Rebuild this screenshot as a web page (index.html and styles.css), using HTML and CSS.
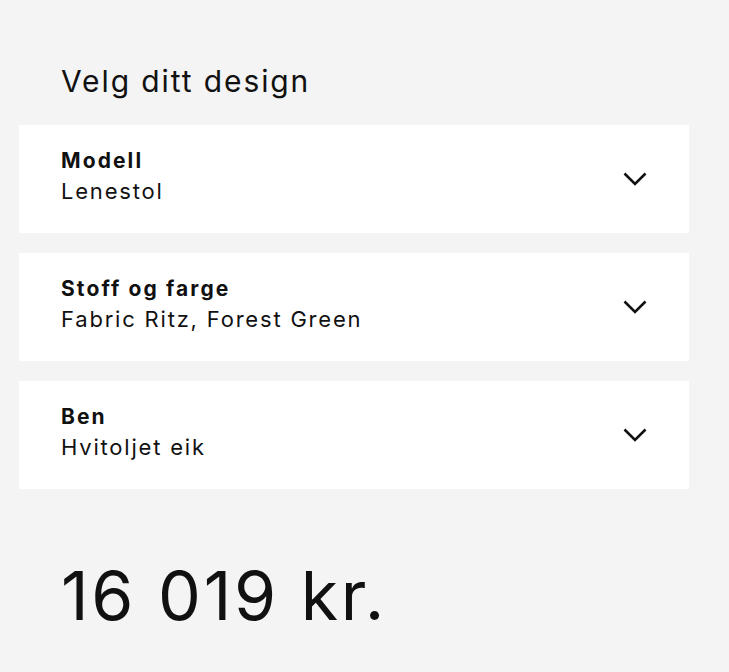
FILE: index.html
```html
<!DOCTYPE html>
<html lang="no">
<head>
<meta charset="utf-8">
<link rel="stylesheet" href="styles.css">
</head>
<body>
<main class="page">
  <h1 class="title">Velg ditt design</h1>
  <div class="cards">
    <div class="card">
      <div class="card-text">
        <div class="card-label">Modell</div>
        <div class="card-value">Lenestol</div>
      </div>
      <svg class="chev" width="24" height="14" viewBox="0 0 24 14"><path d="M1.5 1.5 L12 12 L22.5 1.5" fill="none" stroke="#111" stroke-width="2.6"/></svg>
    </div>
    <div class="card">
      <div class="card-text">
        <div class="card-label">Stoff og farge</div>
        <div class="card-value">Fabric Ritz, Forest Green</div>
      </div>
      <svg class="chev" width="24" height="14" viewBox="0 0 24 14"><path d="M1.5 1.5 L12 12 L22.5 1.5" fill="none" stroke="#111" stroke-width="2.6"/></svg>
    </div>
    <div class="card">
      <div class="card-text">
        <div class="card-label">Ben</div>
        <div class="card-value">Hvitoljet eik</div>
      </div>
      <svg class="chev" width="24" height="14" viewBox="0 0 24 14"><path d="M1.5 1.5 L12 12 L22.5 1.5" fill="none" stroke="#111" stroke-width="2.6"/></svg>
    </div>
  </div>
  <div class="price">16 019 kr.</div>
</main>
</body>
</html>
```
FILE: styles.css
```css
html, body {
  margin: 0;
  padding: 0;
  background: #f4f4f4;
}
body {
  font-family: Inter, "Open Sans", sans-serif;
  color: #111;
}
.page {
  width: 670px;
  padding: 0 0 0 19px;
}
.title {
  margin: 0 0 26px 0;
  padding: 63px 0 0 42px;
  font-size: 30px;
  font-weight: 400;
  line-height: 36px;
  letter-spacing: 1.9px;
}
.cards {
  display: flex;
  flex-direction: column;
  gap: 20px;
}
.card {
  background: #fff;
  height: 108px;
  box-sizing: border-box;
  padding: 21px 42px 0 42px;
  display: flex;
  align-items: flex-start;
  justify-content: space-between;
}
.card-text {
  display: flex;
  flex-direction: column;
}
.card-label {
  font-size: 21px;
  font-weight: 700;
  line-height: 30px;
  letter-spacing: 2.1px;
}
.card-value {
  font-size: 22px;
  font-weight: 400;
  line-height: 30px;
  letter-spacing: 1.8px;
}
.chev {
  display: block;
  margin-top: 26px;
}
.price {
  padding: 66px 0 0 42px;
  font-size: 68px;
  line-height: 80px;
  font-weight: 400;
  letter-spacing: 2.7px;
}
```
